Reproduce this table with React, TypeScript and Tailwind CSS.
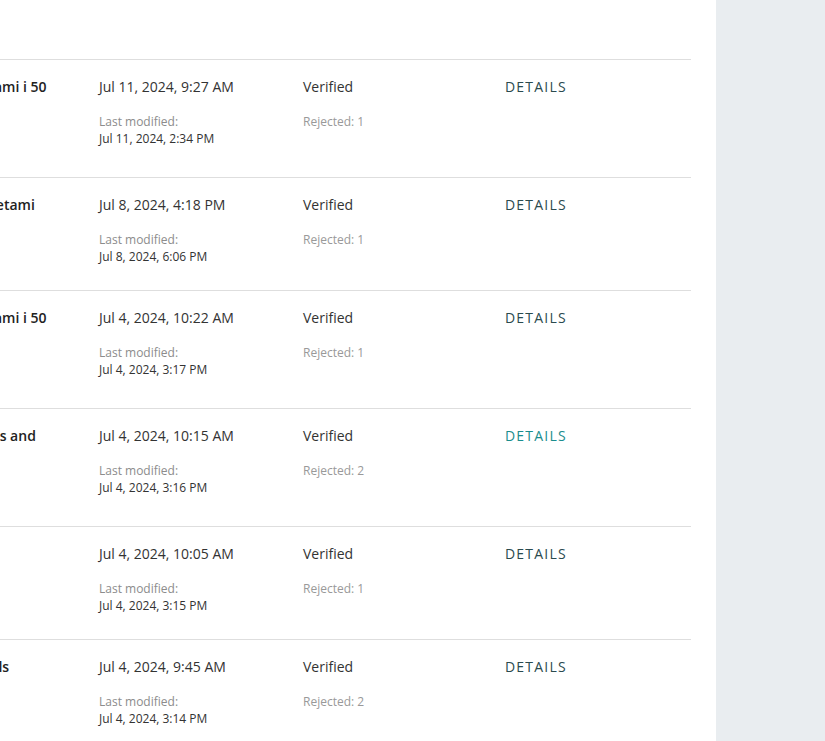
import React from "react";

type Row = {
  name: string;
  created: string;
  modified: string;
  rejected: number;
  height: string;
  active?: boolean;
};

const rows: Row[] = [
  { name: "Summer Sale Tsunami i 50", created: "Jul 11, 2024, 9:27 AM", modified: "Jul 11, 2024, 2:34 PM", rejected: 1, height: "h-[118px]" },
  { name: "Spring Promo Konfetami", created: "Jul 8, 2024, 4:18 PM", modified: "Jul 8, 2024, 6:06 PM", rejected: 1, height: "h-[113px]" },
  { name: "Summer Sale Tsunami i 50", created: "Jul 4, 2024, 10:22 AM", modified: "Jul 4, 2024, 3:17 PM", rejected: 1, height: "h-[118px]" },
  { name: "Free shipping: shoes and bags", created: "Jul 4, 2024, 10:15 AM", modified: "Jul 4, 2024, 3:16 PM", rejected: 2, height: "h-[118px]", active: true },
  { name: "New Arrivals", created: "Jul 4, 2024, 10:05 AM", modified: "Jul 4, 2024, 3:15 PM", rejected: 1, height: "h-[113px]" },
  { name: "Weekend Maxi Deals", created: "Jul 4, 2024, 9:45 AM", modified: "Jul 4, 2024, 3:14 PM", rejected: 2, height: "h-[118px]" },
];

const App = () => {
  return (
    <div className="flex w-[825px] h-[741px] overflow-hidden bg-white font-['Open_Sans',sans-serif]">
      {/* List panel */}
      <div className="w-[716px] shrink-0 overflow-hidden bg-white">
        <div className="h-[59px]" />
        <div className="-ml-[131px] w-[822px]">
          {rows.map((row) => (
            <div
              key={row.created}
              className={`flex border-t border-[#dedede] pt-[16px] ${row.height}`}
            >
              {/* Name */}
              <div className="w-[230px] shrink-0 pr-8">
                <p className="text-[14px] leading-[21px] font-semibold text-[#222]">
                  {row.name}
                </p>
              </div>
              {/* Dates */}
              <div className="w-[204px] shrink-0">
                <p className="text-[14px] leading-[21px] text-[#333]">{row.created}</p>
                <p className="mt-[16px] text-[12px] leading-[17px] text-[#8c8c8c]">
                  Last modified:
                </p>
                <p className="text-[12px] leading-[17px] text-[#333]">{row.modified}</p>
              </div>
              {/* Status */}
              <div className="w-[202px] shrink-0">
                <p className="text-[14px] leading-[21px] text-[#333]">Verified</p>
                <p className="mt-[16px] text-[12px] leading-[17px] text-[#999]">
                  Rejected: {row.rejected}
                </p>
              </div>
              {/* Action */}
              <div className="flex-1">
                <button
                  className={`block text-[14px] leading-[21px] tracking-[1.2px] cursor-pointer ${
                    row.active ? "text-[#1a8d8d]" : "text-[#2a4a4e]"
                  }`}
                >
                  DETAILS
                </button>
              </div>
            </div>
          ))}
        </div>
      </div>
      {/* Sidebar */}
      <div className="flex-1 bg-[#e9edf0]" />
    </div>
  );
};

export default App;
